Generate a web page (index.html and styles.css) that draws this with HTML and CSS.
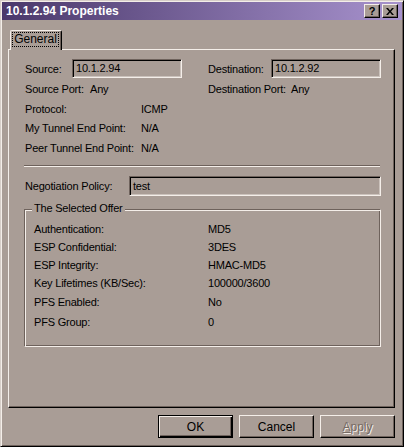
FILE: index.html
```html
<!DOCTYPE html>
<html>
<head>
<meta charset="utf-8">
<link rel="stylesheet" href="styles.css">
</head>
<body>
<div class="window">
  <div class="titlebar">
    <span class="title">10.1.2.94 Properties</span>
    <div class="tbtns">
      <span class="tbtn help">?</span>
      <span class="tbtn close"><svg width="8" height="7" viewBox="0 0 8 7"><path d="M0 0h2l2 2.5 2-2.5h2l-3 3.5 3 3.5h-2l-2-2.5-2 2.5h-2l3-3.5z" fill="#000"/></svg></span>
    </div>
  </div>
  <div class="content">
    <div class="tabs"><div class="tab"><span class="focus">General</span></div></div>
    <div class="panel">
      <div class="row r1">
        <div class="half"><span class="lbl w47">Source:</span><span class="box w110">10.1.2.94</span></div>
        <div class="half"><span class="lbl w64">Destination:</span><span class="box w110">10.1.2.92</span></div>
      </div>
      <div class="row h20 mt1">
        <div class="half"><span class="lbl w65">Source Port:</span><span>Any</span></div>
        <div class="half"><span class="lbl w84">Destination Port:</span><span>Any</span></div>
      </div>
      <div class="row h19"><span class="lbl w116">Protocol:</span><span>ICMP</span></div>
      <div class="row h20"><span class="lbl w116">My Tunnel End Point:</span><span>N/A</span></div>
      <div class="row h19"><span class="lbl w116">Peer Tunnel End Point:</span><span>N/A</span></div>
      <div class="sep"></div>
      <div class="row neg"><span class="lbl w104">Negotiation Policy:</span><span class="box w252">test</span></div>
      <div class="group">
        <span class="legend">The Selected Offer</span>
        <div class="offer">
          <span>Authentication:</span><span>MD5</span>
          <span>ESP Confidential:</span><span>3DES</span>
          <span>ESP Integrity:</span><span>HMAC-MD5</span>
          <span>Key Lifetimes (KB/Sec):</span><span>100000/3600</span>
          <span>PFS Enabled:</span><span>No</span>
          <span>PFS Group:</span><span>0</span>
        </div>
      </div>
    </div>
    <div class="buttons">
      <span class="btn default">OK</span>
      <span class="btn">Cancel</span>
      <span class="btn disabled"><u>A</u>pply</span>
    </div>
  </div>
</div>
</body>
</html>
```
FILE: styles.css
```css
html, body {
  margin: 0;
  padding: 0;
  background: #a99d96;
}
body {
  font-family: "Liberation Sans", Arial, sans-serif;
  font-size: 11px;
  letter-spacing: -0.2px;
  color: #000;
}
.window {
  width: 404px;
  height: 447px;
  box-sizing: border-box;
  border: 1px solid;
  border-color: #d6cec8 #000 #000 #d6cec8;
  box-shadow: inset 1px 1px #f4eee9, inset -1px -1px #6e625c;
  padding: 1px;
  background: #a99d96;
}
.titlebar {
  height: 18px;
  display: flex;
  align-items: center;
  justify-content: space-between;
  padding: 0 4px 0 4px;
  background: linear-gradient(to right, #4a386b, #a792cd);
}
.title {
  color: #fff;
  font-weight: bold;
  font-size: 12px;
  letter-spacing: 0;
}
.tbtns {
  display: flex;
  gap: 2px;
}
.tbtn {
  width: 16px;
  height: 14px;
  box-sizing: border-box;
  display: flex;
  align-items: center;
  justify-content: center;
  background: #a99d96;
  border: 1px solid;
  border-color: #f4eee9 #000 #000 #f4eee9;
  box-shadow: inset -1px -1px #6e625c;
  font-weight: bold;
  font-size: 11px;
  line-height: 12px;
}
.content {
  padding: 0 6px;
}
.tabs {
  margin-top: 10px;
  display: flex;
}
.tab {
  position: relative;
  z-index: 1;
  margin-left: 2px;
  width: 52px;
  height: 20px;
  margin-bottom: -1px;
  box-sizing: border-box;
  background: #a99d96;
  border-top: 1px solid #f4eee9;
  border-left: 1px solid #f4eee9;
  border-right: 1px solid #000;
  border-radius: 2px 2px 0 0;
  box-shadow: inset -1px 0 #6e625c;
  padding: 1px 2px 0 1px;
}
.focus {
  display: block;
  height: 15px;
  box-sizing: border-box;
  border: 1px dotted #000;
  text-align: center;
  line-height: 13px;
  font-size: 12px;
  letter-spacing: 0;
}
.panel {
  width: 387px;
  height: 359px;
  box-sizing: border-box;
  border: 1px solid;
  border-color: #f4eee9 #000 #000 #f4eee9;
  box-shadow: inset -1px -1px #6e625c;
  padding: 9px 12px 0 15px;
}
.row {
  display: flex;
  align-items: center;
}
.r1 { height: 19px; }
.h20 { height: 20px; }
.h19 { height: 19px; }
.mt1 { margin-top: 1px; }
.half {
  display: flex;
  align-items: center;
  flex: none;
  width: 183px;
}
.lbl {
  display: inline-block;
  flex: none;
  padding-left: 1px;
  box-sizing: border-box;
  white-space: nowrap;
}
.w47 { width: 48px; }
.w64 { width: 64px; }
.w65 { width: 66px; }
.w84 { width: 84px; }
.w104 { width: 105px; }
.w116 { width: 117px; }
.box {
  display: block;
  flex: none;
  height: 19px;
  box-sizing: border-box;
  border: 1px solid;
  border-color: #6e625c #f4eee9 #f4eee9 #6e625c;
  box-shadow: inset 1px 1px #000, inset -1px -1px #cbc2bc;
  padding: 0 3px;
  line-height: 17px;
}
.w110 { width: 110px; }
.w252 { width: 252px; }
.sep {
  margin-top: 8px;
  width: 356px;
  height: 0;
  border-top: 1px solid #6e625c;
  border-bottom: 1px solid #f4eee9;
}
.neg {
  margin-top: 9px;
  height: 20px;
}
.neg .box { height: 20px; line-height: 18px; }
.group {
  margin-top: 13px;
  width: 357px;
  height: 138px;
  box-sizing: border-box;
  border: 1px solid;
  border-color: #6e625c #f4eee9 #f4eee9 #6e625c;
  box-shadow: inset 1px 1px #f4eee9, inset -1px -1px #6e625c;
  padding: 0 0 0 9px;
}
.legend {
  display: block;
  width: max-content;
  margin-top: -8px;
  margin-left: -2px;
  padding: 0 2px;
  background: #a99d96;
  line-height: 13px;
}
.offer {
  margin-top: 5px;
  display: grid;
  grid-template-columns: 174px auto;
  grid-template-rows: 18px 18px 17px 19px 20px 19px;
  align-items: center;
}
.buttons {
  margin-top: 7px;
  width: 387px;
  display: flex;
  justify-content: flex-end;
  gap: 6px;
}
.btn {
  width: 75px;
  height: 23px;
  box-sizing: border-box;
  display: flex;
  align-items: center;
  justify-content: center;
  border: 1px solid;
  border-color: #f4eee9 #000 #000 #f4eee9;
  box-shadow: inset -1px -1px #6e625c;
  font-size: 12px;
  letter-spacing: 0;
}
.btn.default {
  border-color: #000;
  box-shadow: inset 1px 1px #f4eee9, inset -1px -1px #000, inset -2px -2px #6e625c;
}
.btn.disabled {
  color: #776b64;
  text-shadow: 1px 1px #f4eee9;
}
```
